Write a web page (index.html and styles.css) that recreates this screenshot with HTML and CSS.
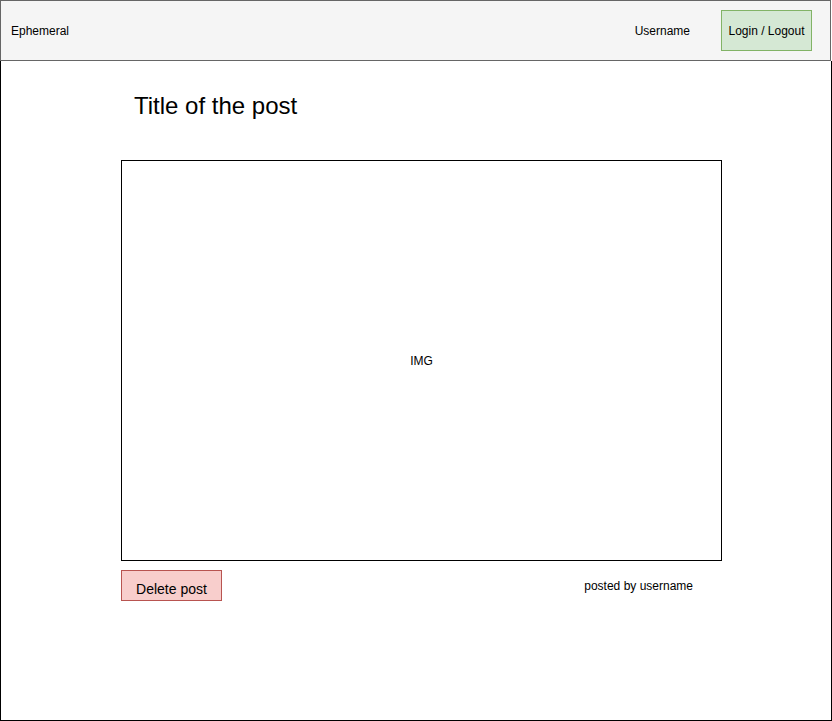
FILE: index.html
```html
<!DOCTYPE html>
<html>
<head>
<meta charset="utf-8">
<link rel="stylesheet" href="styles.css">
</head>
<body>
<div class="app">
  <header class="header">
    <span class="brand">Ephemeral</span>
    <span class="user">Username</span>
    <button class="login">Login / Logout</button>
  </header>
  <main class="main">
    <h1 class="title">Title of the post</h1>
    <div class="image">IMG</div>
    <div class="footer">
      <button class="delete">Delete post</button>
      <span class="byline">posted by username</span>
    </div>
  </main>
</div>
</body>
</html>
```
FILE: styles.css
```css
html, body {
  margin: 0;
  padding: 0;
  background: #ffffff;
}
body {
  font-family: "Liberation Sans", Arial, Helvetica, sans-serif;
  color: #000;
}
.app {
  width: 832px;
  height: 721px;
  display: flex;
  flex-direction: column;
}
.header {
  box-sizing: border-box;
  width: 831px;
  height: 61px;
  background: #f5f5f5;
  border: 1px solid #666666;
  display: flex;
  align-items: center;
  padding: 0 18px 0 10px;
  font-size: 12px;
}
.brand {
  flex: 1;
}
.user {
  margin-right: 31px;
}
.login {
  box-sizing: border-box;
  width: 91px;
  height: 41px;
  margin: 0;
  padding: 0;
  background: #d5e8d4;
  border: 1px solid #82b366;
  font-family: inherit;
  font-size: 12px;
  color: #000;
}
.main {
  box-sizing: border-box;
  flex: 1;
  border: 1px solid #000;
  border-top: none;
  padding: 0 0 0 120px;
  display: flex;
  flex-direction: column;
}
.title {
  margin: 31px 0 0 13px;
  font-size: 24px;
  line-height: 28px;
  font-weight: normal;
}
.image {
  box-sizing: border-box;
  width: 601px;
  height: 401px;
  margin-top: 40px;
  border: 1px solid #000;
  display: flex;
  align-items: center;
  justify-content: center;
  font-size: 12px;
}
.footer {
  width: 601px;
  margin-top: 9px;
  display: flex;
  align-items: center;
  justify-content: space-between;
}
.delete {
  box-sizing: border-box;
  width: 101px;
  height: 31px;
  margin: 0;
  padding: 6px 0 0 0;
  background: #f8cecc;
  border: 1px solid #b85450;
  font-family: inherit;
  font-size: 14px;
  color: #000;
}
.byline {
  font-size: 12px;
  margin-right: 29px;
}
```
